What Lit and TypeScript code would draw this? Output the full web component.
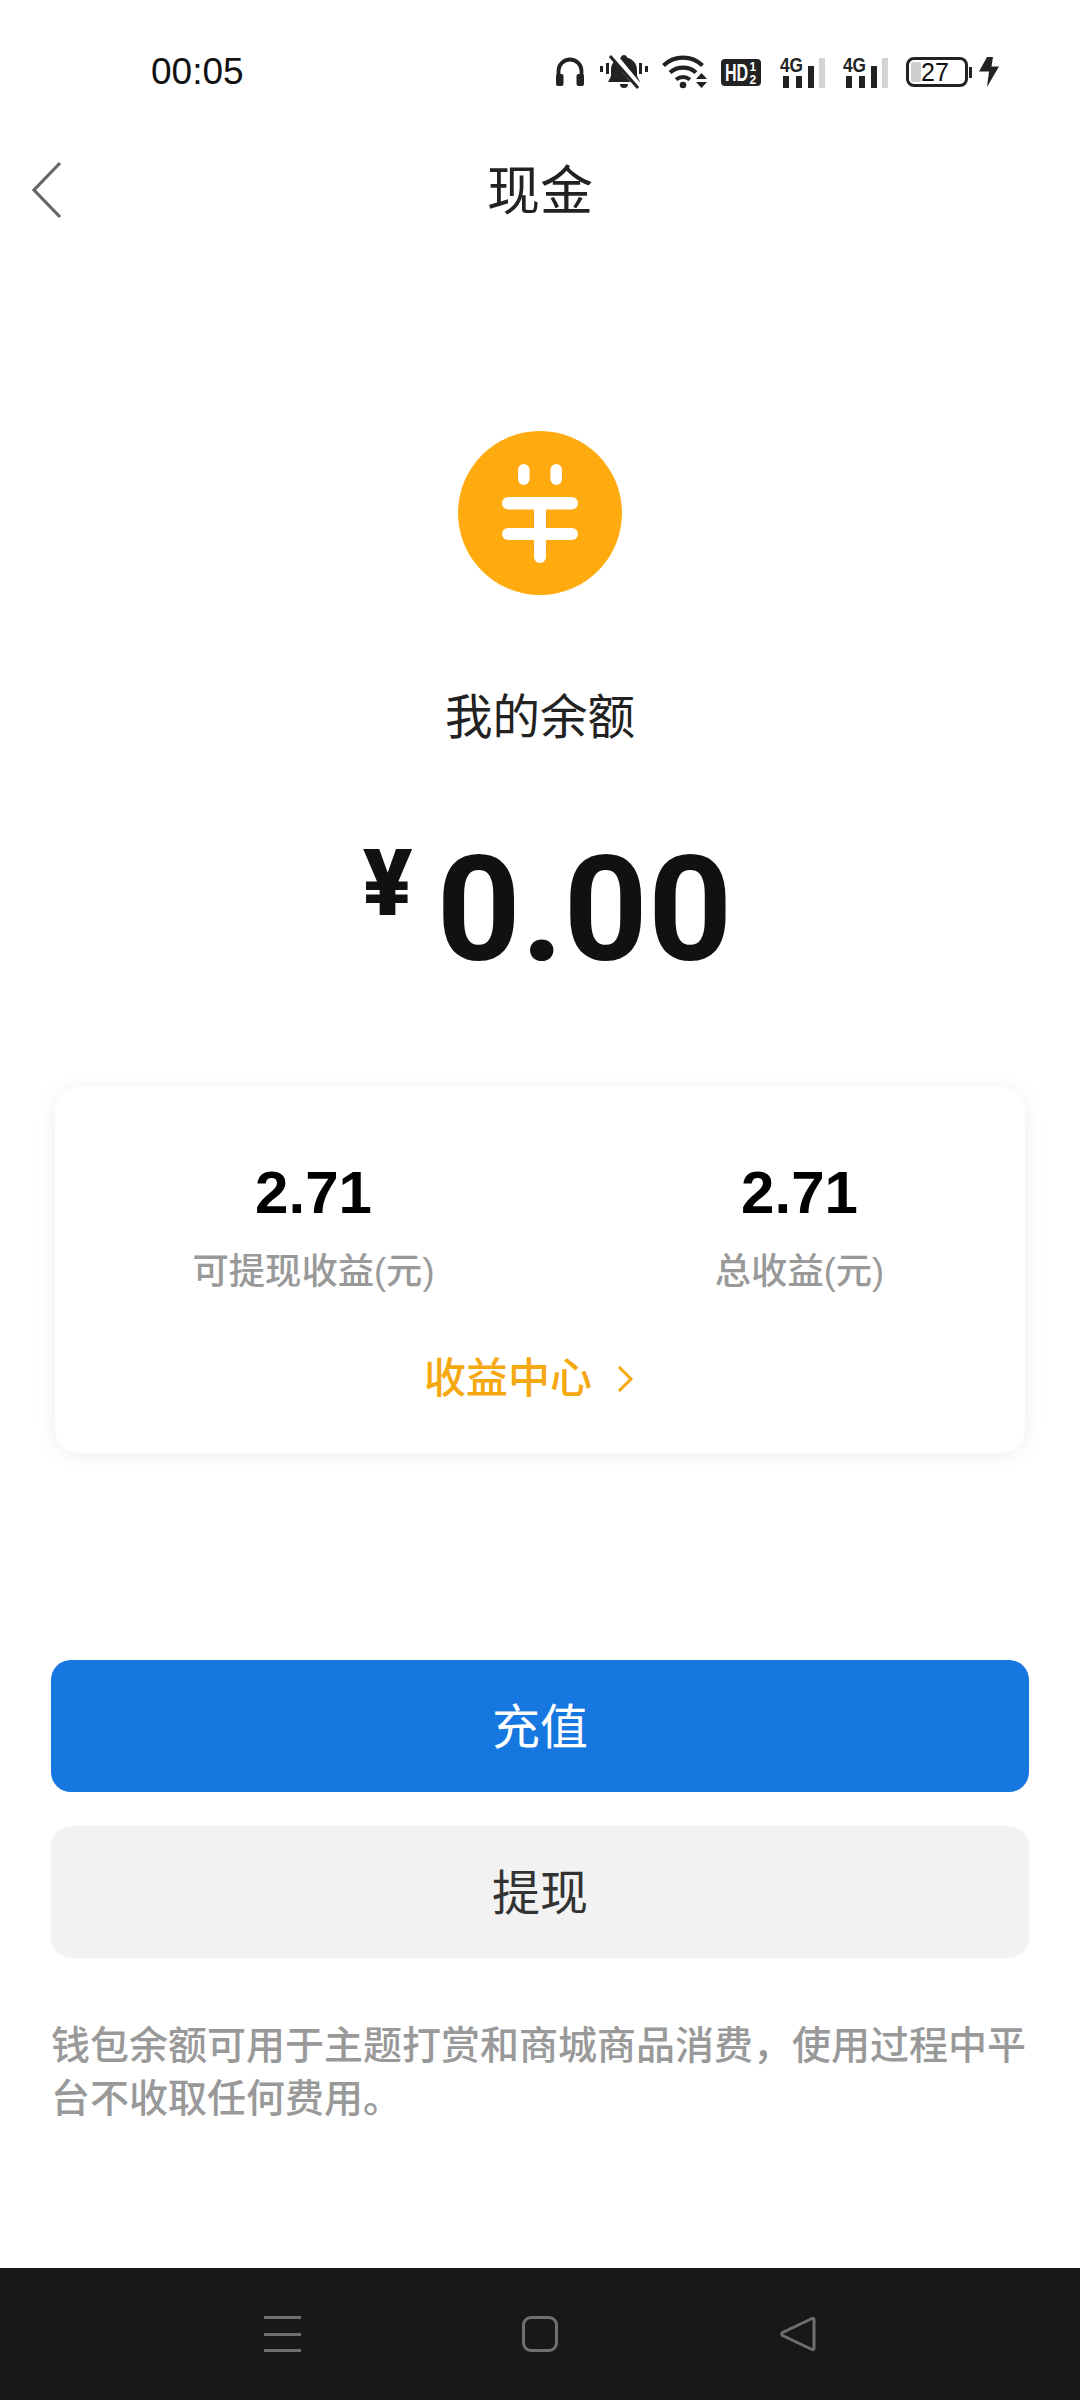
import { LitElement, css, html, svg } from 'lit';
import { customElement } from 'lit/decorators.js';

/** Status bar glyphs, one svg each, drawn 1:1 in page pixels. */
const headphones = svg`<svg class="ic" width="30" height="30" viewBox="0 0 30 30">
  <path d="M3.500 20V14a11.500 11.500 0 0 1 23 0v6" fill="none" stroke="#222" stroke-width="3.800"/>
  <rect x="1" y="17" width="7.500" height="12" rx="2" fill="#222"/>
  <rect x="21.500" y="17" width="7.500" height="12" rx="2" fill="#222"/>
</svg>`;

const muted = svg`<svg class="ic" width="48" height="34" viewBox="0 0 48 34">
  <path d="M24 0c1.800 0 2.800 1 3 2.600C33.500 4.500 37 9 37 15v6l3 6H8l3-6v-6c0-6 3.500-10.500 10-12.400C21.200 1 22.200 0 24 0z" fill="#222"/>
  <path d="M20 29h8a4 4 0 0 1-8 0z" fill="#222"/>
  <path d="M12 -1l28 34" stroke="#fff" stroke-width="7"/>
  <path d="M10 1l28 32" stroke="#222" stroke-width="3"/>
  <rect x="0" y="11" width="3" height="6" fill="#222"/>
  <rect x="6" y="8" width="3" height="11" fill="#222"/>
  <rect x="39" y="8" width="3" height="11" fill="#222"/>
  <rect x="45" y="11" width="3" height="6" fill="#222"/>
</svg>`;

const wifi = svg`<svg class="ic" width="46" height="34" viewBox="0 0 46 34">
  <path d="M1.500 10.500C12.500 0 29.500 0 40.500 10.500" fill="none" stroke="#222" stroke-width="4.200"/>
  <path d="M8 17.500C15.500 11 26.500 11 34 17.500" fill="none" stroke="#222" stroke-width="4.200"/>
  <path d="M14 24.500c4.500-3.300 9.500-3.300 14 0" fill="none" stroke="#222" stroke-width="4"/>
  <circle cx="21" cy="30" r="3.300" fill="#222"/>
  <path d="M39.500 18l5.500 6H34zM34 27h11l-5.500 6z" fill="#222"/>
</svg>`;

const hd = svg`<svg class="ic" width="40" height="27" viewBox="0 0 40 27">
  <rect width="40" height="27" rx="4" fill="#222"/>
  <text transform="translate(4 22) scale(.67 1)" font-family="Liberation Sans" font-weight="700" font-size="24" fill="#fff">HD</text>
  <text x="28.500" y="12" font-family="Liberation Sans" font-weight="700" font-size="12" fill="#fff">1</text>
  <text x="28.500" y="25" font-family="Liberation Sans" font-weight="700" font-size="12" fill="#fff">2</text>
</svg>`;

const signal = svg`<svg class="ic sig" width="46" height="37" viewBox="0 -4 46 37">
  <text x="0" y="16" font-family="Liberation Sans" font-weight="700" font-size="21" textLength="23" lengthAdjust="spacingAndGlyphs" fill="#222">4G</text>
  <rect x="3" y="20" width="6" height="12" fill="#222"/>
  <rect x="16" y="20" width="6" height="12" fill="#222"/>
  <rect x="28" y="10" width="6" height="22" fill="#222"/>
  <rect x="39" y="2" width="6" height="30" fill="#d4d4d4"/>
</svg>`;

const bolt = svg`<svg class="ic" width="20" height="30" viewBox="0 0 20 30">
  <path d="M8 0h6l-1.500 9.500H20L8 30l2-15.500H0z" fill="#222"/>
</svg>`;

@customElement('app-root')
export class AppRoot extends LitElement {
  render() {
    return html`
      <div class="status">
        <span class="time">00:05</span>
        <div class="icons">
          ${headphones}${muted}${wifi}${hd}${signal}${signal}
          <div class="battery">
            <div class="cell"><i class="level"></i><span>27</span></div>
            <i class="nub"></i>
          </div>
          ${bolt}
        </div>
      </div>

      <header class="nav">
        <svg class="back" width="32" height="58" viewBox="0 0 32 58">
          <path d="M29 2L3 29l26 27" fill="none" stroke="#666" stroke-width="3.200"/>
        </svg>
        <h1>现金</h1>
      </header>

      <main>
        <svg class="coin" width="164" height="164" viewBox="0 0 164 164">
          <circle cx="82" cy="82" r="82" fill="#ffab0f"/>
          <g fill="#fff">
            <rect x="60" y="33" width="11.500" height="21" rx="5.750"/>
            <rect x="92.500" y="33" width="11.500" height="21" rx="5.750"/>
            <rect x="44" y="66" width="76" height="12.500" rx="6.250"/>
            <rect x="44" y="97" width="76" height="12" rx="6"/>
            <rect x="76" y="72" width="12" height="60" rx="6"/>
          </g>
        </svg>
        <div class="caption">我的余额</div>
        <div class="amount"><span class="yen">¥</span><span class="value">0.00</span></div>

        <section class="card">
          <div class="stats">
            <div class="stat"><b>2.71</b><span>可提现收益(元)</span></div>
            <div class="stat"><b>2.71</b><span>总收益(元)</span></div>
          </div>
          <div class="link">
            收益中心
            <svg width="18" height="28" viewBox="0 0 18 28">
              <path d="M3 2l12 12L3 26" fill="none" stroke="#f5a80f" stroke-width="3"/>
            </svg>
          </div>
        </section>

        <button class="btn primary" type="button">充值</button>
        <button class="btn secondary" type="button">提现</button>

        <p class="note">钱包余额可用于主题打赏和商城商品消费，使用过程中平台不收取任何费用。</p>
      </main>

      <footer class="sysbar">
        <div class="menu"><i></i><i></i><i></i></div>
        <i class="home"></i>
        <svg width="37" height="36" viewBox="0 0 37 36">
          <path d="M33 2.500c1-.6 2 0 2 1.200v28.600c0 1.200-1 1.800-2 1.200L3.500 19.500c-1-.7-1-2.300 0-3z" fill="none" stroke="#6f6f6f" stroke-width="3" stroke-linejoin="round"/>
        </svg>
      </footer>
    `;
  }

  static styles = css`
    :host {
      display: flex;
      flex-direction: column;
      width: 1080px;
      min-height: 2400px;
      background: #fff;
      color: #222;
      font-family: "Liberation Sans", "Noto Sans CJK SC", sans-serif;
    }

    i {
      display: block;
    }

    .status {
      display: flex;
      align-items: center;
      justify-content: space-between;
      height: 144px;
      padding: 0 81px 0 151px;
    }

    .time {
      font-size: 37px;
      color: #111;
    }

    .icons {
      display: flex;
      align-items: center;
    }

    .ic {
      display: block;
      flex: none;
    }

    .sig {
      margin-bottom: 4px;
    }

    .ic:nth-child(2) {
      margin-left: 15px;
    }

    .ic:nth-child(3) {
      margin-left: 14px;
    }

    .ic:nth-child(4) {
      margin-left: 13px;
    }

    .ic:nth-child(5) {
      margin-left: 19px;
    }

    .ic:nth-child(6) {
      margin-left: 17px;
    }

    .ic:nth-child(8) {
      margin-left: 7px;
    }

    .battery {
      display: flex;
      align-items: center;
      gap: 1px;
      margin-left: 17px;
    }

    .cell {
      position: relative;
      display: flex;
      align-items: center;
      justify-content: center;
      box-sizing: border-box;
      width: 62px;
      height: 30px;
      border: 3px solid #222;
      border-radius: 8px;
      font-size: 25px;
      color: #111;
    }

    .cell span {
      position: relative;
      left: -2px;
    }

    .level {
      position: absolute;
      left: 2px;
      top: 2px;
      bottom: 2px;
      width: 10px;
      background: #cfcfcf;
      border-radius: 2px;
    }

    .nub {
      width: 3px;
      height: 11px;
      background: #222;
    }

    .nav {
      position: relative;
      display: flex;
      align-items: center;
      justify-content: center;
      height: 94px;
    }

    .back {
      position: absolute;
      left: 31px;
      top: 17px;
    }

    h1 {
      margin: 1px 0 0;
      font-size: 53px;
      line-height: 76px;
      font-weight: 400;
      color: #222;
    }

    main {
      display: flex;
      flex-direction: column;
      align-items: center;
      padding: 193px 51px 0;
    }

    .coin {
      display: block;
    }

    .caption {
      margin-top: 93px;
      font-size: 47.500px;
      line-height: 60px;
      color: #222;
    }

    .amount {
      display: flex;
      align-items: flex-start;
      margin: 77px 0 0 15px;
      height: 160px;
      color: #111;
      font-family: Roboto, sans-serif;
      font-weight: 700;
    }

    .yen {
      font-size: 92px;
      line-height: 100px;
      margin: 9px 24px 0 0;
      font-weight: 900;
    }

    .value {
      font-size: 147px;
      line-height: 170px;
    }

    .card {
      box-sizing: border-box;
      display: flex;
      flex-direction: column;
      align-items: center;
      width: 970px;
      height: 366px;
      margin-top: 102px;
      padding-top: 72px;
      background: #fff;
      border-radius: 24px;
      box-shadow: 0 2px 22px rgba(0, 0, 0, 0.07);
    }

    .stats {
      display: grid;
      grid-template-columns: 486px 486px;
      justify-content: center;
      width: 100%;
      padding-left: 33px;
      box-sizing: border-box;
    }

    .stat {
      display: flex;
      flex-direction: column;
      align-items: center;
    }

    .stat b {
      font-size: 60px;
      line-height: 68px;
      color: #000;
    }

    .stat span {
      margin-top: 20px;
      font-size: 36.300px;
      line-height: 50px;
      font-weight: 500;
      color: #999;
    }

    .link {
      display: flex;
      align-items: center;
      gap: 24px;
      margin: 54px 22px 0 0;
      font-size: 42px;
      line-height: 56px;
      font-weight: 500;
      color: #f5a80f;
    }

    .btn {
      display: block;
      width: 978px;
      height: 132px;
      padding: 0 0 6px;
      border: none;
      border-radius: 20px;
      font: inherit;
      font-size: 48px;
    }

    .primary {
      margin-top: 207px;
      background: #1677e0;
      color: #fff;
    }

    .secondary {
      margin-top: 34px;
      background: #f2f2f2;
      color: #333;
    }

    .note {
      align-self: stretch;
      margin: 61px 0 0;
      font-size: 39px;
      line-height: 53px;
      font-weight: 500;
      color: #999;
    }

    .sysbar {
      display: flex;
      align-items: center;
      justify-content: space-between;
      box-sizing: border-box;
      height: 132px;
      margin-top: auto;
      padding: 0 264px;
      background: #181818;
    }

    .menu {
      display: flex;
      flex-direction: column;
      gap: 13.500px;
      width: 37px;
    }

    .menu i {
      height: 3px;
      background: #6f6f6f;
    }

    .home {
      box-sizing: border-box;
      width: 36px;
      height: 36px;
      border: 3px solid #6f6f6f;
      border-radius: 9px;
    }
  `;
}

declare global {
  interface HTMLElementTagNameMap {
    'app-root': AppRoot;
  }
}
